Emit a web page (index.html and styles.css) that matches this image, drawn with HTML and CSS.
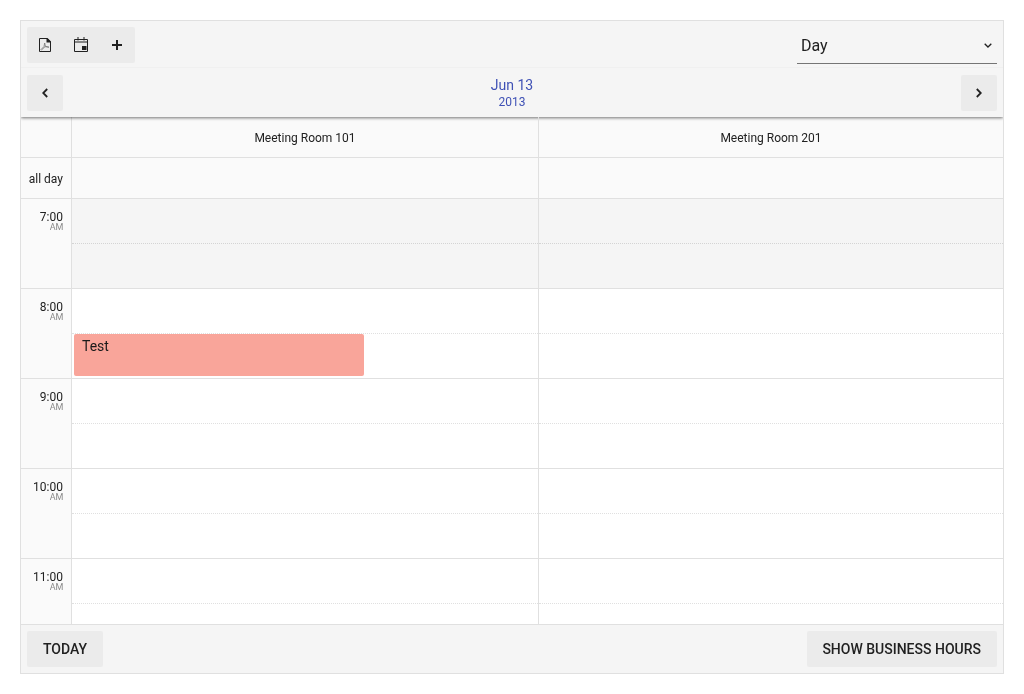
FILE: index.html
```html
<!DOCTYPE html>
<html>
<head>
<title>Scheduler</title>
<link rel="stylesheet" href="styles.css">
</head>
<body>
<div class="scheduler">

  <div class="toolbar">
    <div class="btn-group">
      <button class="icon-btn" type="button">
        <svg width="16" height="16" viewBox="0 0 16 16"><path class="line" d="M2.500 1.500h7.500l3.500 3.500v9.500h-11z"/><path class="fill" d="M9.500 1h1l3.500 3.500v1h-4.500z"/><path class="thin" d="M3.500 13l3.500-3.500.7-3.500.6 3.200 3.700 1-4-.5-3.500 3.300"/></svg>
      </button>
      <button class="icon-btn" type="button">
        <svg width="16" height="16" viewBox="0 0 16 16"><path class="line" d="M1.500 2.500h13v12h-13z"/><path class="line" d="M1.500 5h13"/><path class="fill" d="M4.500 0h1v3.500h-1zM10.500 0h1v3.500h-1zM9 9h4.500v4h-4.500z"/></svg>
      </button>
      <button class="icon-btn" type="button">
        <svg width="16" height="16" viewBox="0 0 16 16"><path class="fill" d="M7 3h2v4h4v2h-4v4h-2v-4h-4v-2h4z"/></svg>
      </button>
    </div>
    <div class="view-select">
      <span>Day</span>
      <svg width="8" height="5" viewBox="0 0 8 5"><path class="chev" d="M.7 .7l3.300 3.300 3.300-3.300"/></svg>
    </div>
  </div>

  <div class="navbar">
    <button class="icon-btn solo" type="button">
      <svg width="7" height="10" viewBox="0 0 7 10"><path class="chev bold" d="M5.200 1l-4 4 4 4"/></svg>
    </button>
    <div class="title">
      <div class="title-main">Jun 13</div>
      <div class="title-sub">2013</div>
    </div>
    <button class="icon-btn solo" type="button">
      <svg width="7" height="10" viewBox="0 0 7 10"><path class="chev bold" d="M1.800 1l4 4-4 4"/></svg>
    </button>
  </div>

  <div class="row head-row">
    <div class="time-cell"></div>
    <div class="cell">Meeting Room 101</div>
    <div class="cell">Meeting Room 201</div>
  </div>
  <div class="row allday-row">
    <div class="time-cell">all day</div>
    <div class="cell"></div>
    <div class="cell"></div>
  </div>

  <div class="body">
    <div class="row hour off">
      <div class="time-cell"><div class="t">7:00</div><div class="ampm">AM</div></div>
      <div class="cell"><div class="half"></div></div>
      <div class="cell"><div class="half"></div></div>
    </div>
    <div class="row hour">
      <div class="time-cell"><div class="t">8:00</div><div class="ampm">AM</div></div>
      <div class="cell">
        <div class="half"></div>
        <div class="event">Test</div>
      </div>
      <div class="cell"><div class="half"></div></div>
    </div>
    <div class="row hour">
      <div class="time-cell"><div class="t">9:00</div><div class="ampm">AM</div></div>
      <div class="cell"><div class="half"></div></div>
      <div class="cell"><div class="half"></div></div>
    </div>
    <div class="row hour">
      <div class="time-cell"><div class="t">10:00</div><div class="ampm">AM</div></div>
      <div class="cell"><div class="half"></div></div>
      <div class="cell"><div class="half"></div></div>
    </div>
    <div class="row hour">
      <div class="time-cell"><div class="t">11:00</div><div class="ampm">AM</div></div>
      <div class="cell"><div class="half"></div></div>
      <div class="cell"><div class="half"></div></div>
    </div>
  </div>

  <div class="footer">
    <button class="text-btn" type="button">TODAY</button>
    <button class="text-btn wide" type="button">SHOW BUSINESS HOURS</button>
  </div>

</div>
</body>
</html>
```

FILE: styles.css
```css
html, body { margin: 0; padding: 0; }
body { background: #fff; padding: 20px; font-family: Roboto, "Liberation Sans", sans-serif; color: #212121; }

.scheduler {
  width: 984px;
  height: 654px;
  box-sizing: border-box;
  border: 1px solid #e0e0e0;
  display: flex;
  flex-direction: column;
  overflow: hidden;
  will-change: transform;
}

/* toolbars */
.toolbar {
  height: 47px;
  box-sizing: border-box;
  padding: 6px 6px 0;
  background: #f5f5f5;
  border-bottom: 1px solid #f0f0f0;
  display: flex;
  justify-content: space-between;
  align-items: flex-start;
}
.navbar {
  height: 49px;
  box-sizing: border-box;
  padding: 7px 6px 0;
  background: #f5f5f5;
  display: flex;
  justify-content: space-between;
  align-items: flex-start;
  box-shadow: 0 1px 3px rgba(0,0,0,.55);
  clip-path: inset(0 0 -6px 0);
  position: relative;
}
.btn-group { display: flex; background: #ebebeb; border-radius: 2px; }
.icon-btn {
  width: 36px;
  height: 36px;
  padding: 0;
  border: 0;
  background: transparent;
  display: flex;
  align-items: center;
  justify-content: center;
}
.icon-btn.solo { background: #ebebeb; border-radius: 2px; }
.line { fill: none; stroke: #212121; stroke-width: 1; }
.thin { fill: none; stroke: #757575; stroke-width: .8; }
.fill { fill: #212121; }
.chev { fill: none; stroke: #212121; stroke-width: 1.3; }
.chev.bold { stroke-width: 1.8; }

.view-select {
  width: 200px;
  height: 37px;
  box-sizing: border-box;
  padding: 0 5px 0 4px;
  border-bottom: 1px solid #757575;
  display: flex;
  justify-content: space-between;
  align-items: center;
  font-size: 16px;
}

.title { text-align: center; color: #3f51b5; padding-top: 1px; }
.title-main { font-size: 14px; line-height: 18px; }
.title-sub { font-size: 12px; line-height: 15px; padding-top: 1px; }

/* grid */
.row {
  display: grid;
  grid-template-columns: 51px 467px 1fr;
  border-bottom: 1px solid #e0e0e0;
  flex-shrink: 0;
}
.time-cell { border-right: 1px solid #e0e0e0; background: #fafafa; box-sizing: border-box; }
.cell { border-right: 1px solid #e0e0e0; position: relative; box-sizing: border-box; }
.cell:last-child { border-right: 0; }

.head-row { height: 40px; background: #fafafa; font-size: 12px; }
.head-row .cell { display: flex; align-items: center; justify-content: center; padding-top: 2px; }
.allday-row { height: 41px; background: #fafafa; font-size: 12px; box-sizing: border-box; }
.allday-row .time-cell { display: flex; align-items: center; justify-content: flex-end; padding: 2px 8px 0 0; }

.body { flex: 1; overflow: hidden; border-bottom: 1px solid #e0e0e0; }
.hour { height: 90px; box-sizing: border-box; }
.hour .time-cell { text-align: right; padding: 11px 8px 0 0; }
.t { font-size: 12px; line-height: 14px; }
.ampm { font-size: 9px; line-height: 6px; letter-spacing: -.3px; color: #8a8a8a; }
.half { height: 45px; box-sizing: border-box; border-bottom: 1px dotted #e0e0e0; }
.off .cell { background: #f5f5f5; }
.off .half { border-bottom-color: #d4d4d4; }

.event {
  position: absolute;
  left: 2px;
  top: 45px;
  width: 290px;
  height: 42px;
  box-sizing: border-box;
  padding: 3px 8px;
  background: #f9a59a;
  border-radius: 2px;
  font-size: 14px;
  line-height: 18px;
  color: #1a1a1a;
}

.footer {
  height: 48px;
  box-sizing: border-box;
  padding: 6px;
  background: #f5f5f5;
  display: flex;
  justify-content: space-between;
  flex-shrink: 0;
}
.text-btn {
  height: 36px;
  padding: 0 16px;
  border: 0;
  border-radius: 2px;
  background: #ebebeb;
  font-family: inherit;
  font-size: 14px;
  font-weight: 500;
  color: #212121;
}
.text-btn.wide { padding: 0 16px 0 15px; }
```
